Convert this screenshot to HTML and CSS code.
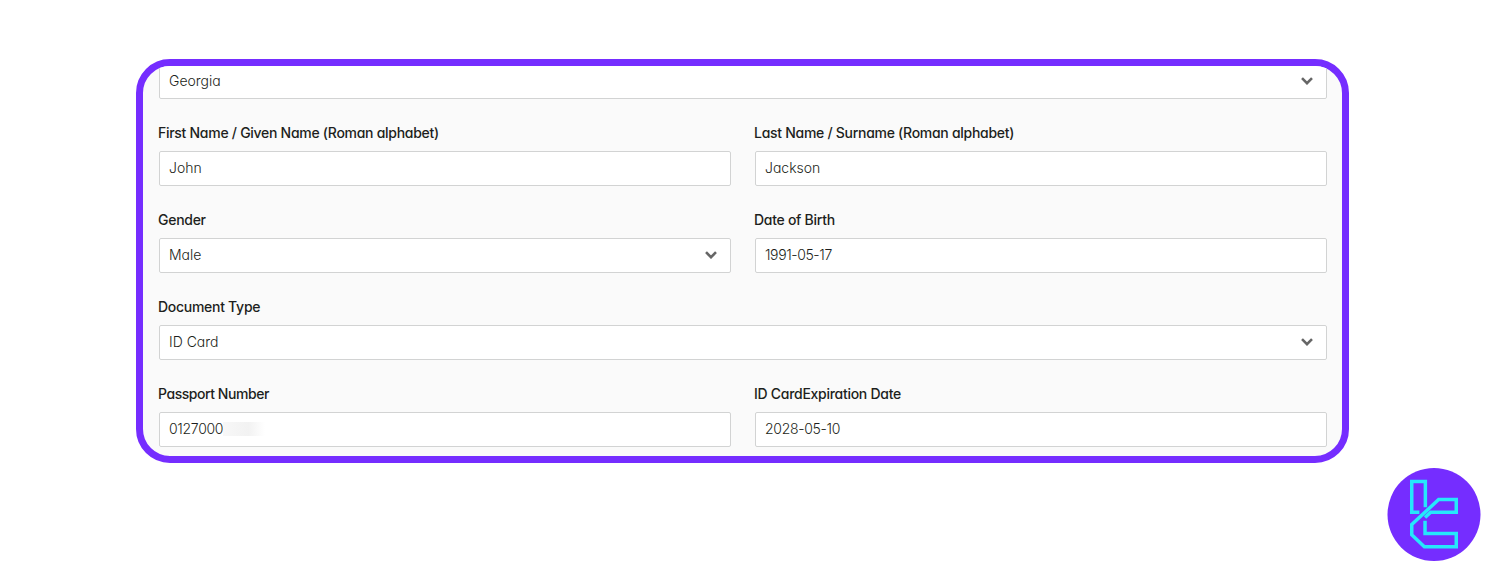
FILE: index.html
```html
<!DOCTYPE html>
<html lang="en">
<head>
<meta charset="UTF-8">
<title>Identity Verification</title>
<link rel="stylesheet" href="styles.css">
</head>

<body>
<form class="panel">
	<div class="field wide">
		<div class="control select"><span>Georgia</span>
			<svg class="arrow" viewBox="0 0 12 8"><path d="M1 1.2l5 5 5-5" /></svg>
		</div>
	</div>
	<div class="field">
		<label>First Name / Given Name (Roman alphabet)</label>
		<div class="control"><span>John</span></div>
	</div>
	<div class="field">
		<label>Last Name / Surname (Roman alphabet)</label>
		<div class="control"><span>Jackson</span></div>
	</div>
	<div class="field">
		<label>Gender</label>
		<div class="control select"><span>Male</span>
			<svg class="arrow" viewBox="0 0 12 8"><path d="M1 1.2l5 5 5-5" /></svg>
		</div>
	</div>
	<div class="field">
		<label>Date of Birth</label>
		<div class="control"><span class="birth">1991-05-17</span></div>
	</div>
	<div class="field wide">
		<label>Document Type</label>
		<div class="control select"><span>ID Card</span>
			<svg class="arrow" viewBox="0 0 12 8"><path d="M1 1.2l5 5 5-5" /></svg>
		</div>
	</div>
	<div class="field">
		<label class="passport">Passport Number</label>
		<div class="control"><span class="number">0127000</span><i class="smudge"></i></div>
	</div>
	<div class="field">
		<label>ID CardExpiration Date</label>
		<div class="control"><span class="number">2028-05-10</span></div>
	</div>
</form>

<svg class="logo" viewBox="21 23 282 280">
	<circle cx="162" cy="163" r="140" />
	<path d="M118 156H95V64H136V141" />
	<path d="M135 172L152 156H229V118H176L95 193V224L133 260H229V220H135V182" />
</svg>
</body>
</html>
```
FILE: styles.css
```css
* {
  box-sizing:border-box;
}

body {
  margin:0;
  min-height:577px;
  padding:59px 19px 0 136px;
  background:#fff;
  color:#1d1f20;
  font-family:Inter, "Liberation Sans", sans-serif;
  font-feature-settings:"cv11";
  font-size:14px;
  display:flex;
  flex-direction:column;
}

.panel {
  width:1213px;
  height:404px;
  padding:0 15px 9px 16px;
  border:7px solid #752dff;
  border-radius:34px;
  background:#fafafa;
  overflow:hidden;
  display:grid;
  grid-template-columns:572px 572px;
  grid-auto-rows:63px;
  gap:24px;
  align-content:end;
}

.field {
  display:flex;
  flex-direction:column;
  justify-content:flex-end;
}

.wide {
  grid-column:span 2;
}

label {
  height:20px;
  line-height:20px;
  margin:0 0 8px -1px;
  font-weight:500;
  letter-spacing:-0.28px;
  align-self:flex-start;
}

.passport {
  letter-spacing:-0.45px;
}

.control {
  height:35px;
  padding:0 9px 2px;
  border:1px solid #d2d3d3;
  border-radius:2px;
  background:#fff;
  font-weight:300;
  display:flex;
  align-items:center;
}

.select {
  justify-content:space-between;
  padding-right:13px;
}

.birth {
  letter-spacing:-0.4px;
}

.number {
  letter-spacing:-0.3px;
}

.arrow {
  width:12px;
  height:8px;
  fill:none;
  stroke:#666;
  stroke-width:2.6;
}

/* blurred out digits */
.smudge {
  width:42px;
  height:14px;
  background:linear-gradient(90deg, #f8f8f8, #f2f2f2 60%, #fff);
}

.logo {
  width:94px;
  height:93px;
  margin-top:5px;
  align-self:flex-end;
}

.logo circle {
  fill:#752dff;
}

.logo path {
  fill:none;
  stroke:#25e8fb;
  stroke-width:10.5;
}
```
